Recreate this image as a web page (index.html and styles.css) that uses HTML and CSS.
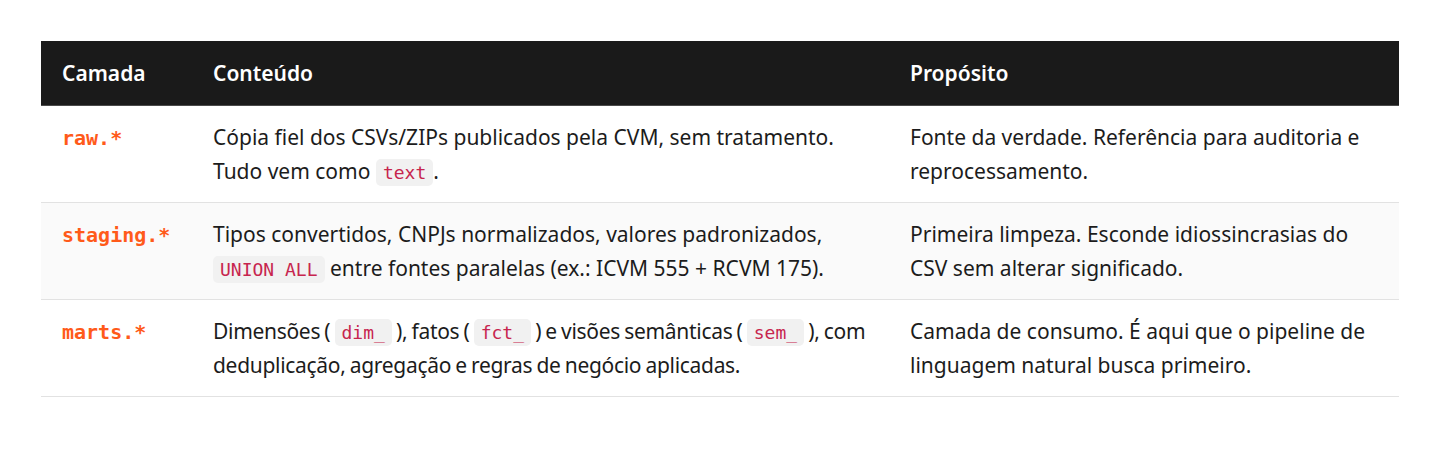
FILE: index.html
```html
<!DOCTYPE html>
<html lang="pt-BR">
<head>
<meta charset="utf-8">
<title>Camadas</title>
<link rel="stylesheet" href="styles.css">
</head>
<body>
<div class="wrap">
<table class="layers">
  <thead>
    <tr>
      <th class="c1">Camada</th>
      <th class="c2">Conteúdo</th>
      <th class="c3">Propósito</th>
    </tr>
  </thead>
  <tbody>
    <tr>
      <td><code class="layer">raw.*</code></td>
      <td>Cópia fiel dos CSVs/ZIPs publicados pela CVM, sem tratamento. Tudo vem como <code>text</code>.</td>
      <td>Fonte da verdade. Referência para auditoria e reprocessamento.</td>
    </tr>
    <tr class="alt">
      <td><code class="layer">staging.*</code></td>
      <td>Tipos convertidos, CNPJs normalizados, valores padronizados, <code>UNION ALL</code> entre fontes paralelas (ex.: ICVM 555 + RCVM 175).</td>
      <td>Primeira limpeza. Esconde idiossincrasias do CSV sem alterar significado.</td>
    </tr>
    <tr>
      <td><code class="layer">marts.*</code></td>
      <td class="dense">Dimensões ( <code>dim_</code> ), fatos ( <code>fct_</code> ) e visões semânticas ( <code>sem_</code> ), com deduplicação, agregação e regras de negócio aplicadas.</td>
      <td>Camada de consumo. É aqui que o pipeline de linguagem natural busca primeiro.</td>
    </tr>
  </tbody>
</table>
</div>
</body>
</html>
```

FILE: styles.css
```css
html, body {
  margin: 0;
  padding: 0;
  background: #ffffff;
}
body {
  font-family: "Noto Sans", "Open Sans", sans-serif;
  color: #1c1c1c;
}
.wrap {
  padding: 41px 57px 0 41px;
}
.layers {
  width: 1358px;
  border-collapse: collapse;
  table-layout: fixed;
  font-size: 21px;
  line-height: 34px;
}
.c1 { width: 151px; }
.c2 { width: 697px; }
.c3 { width: 510px; }
.layers th {
  background: #1a1a1a;
  color: #ffffff;
  text-align: left;
  font-weight: 600;
  font-size: 21px;
  height: 64px;
  padding: 0 21px;
  box-sizing: border-box;
  border-bottom: 1px solid #4a4a4a;
}
.layers td {
  vertical-align: top;
  padding: 14px 21px;
  border-bottom: 1px solid #e2e2e2;
}
.layers tr.alt td {
  background: #fafafa;
}
.layers td.dense {
  word-spacing: -1px;
  letter-spacing: -0.3px;
}
code {
  font-family: "DejaVu Sans Mono", monospace;
  font-size: 18px;
  line-height: 1;
  color: #c7254e;
  background: #f1f1f1;
  border-radius: 5px;
  padding: 3px 7px;
  word-spacing: 0;
  letter-spacing: 0;
}
code.layer {
  font-size: 20px;
  font-weight: bold;
  color: #ff5a1a;
  background: none;
  padding: 0;
}
```
